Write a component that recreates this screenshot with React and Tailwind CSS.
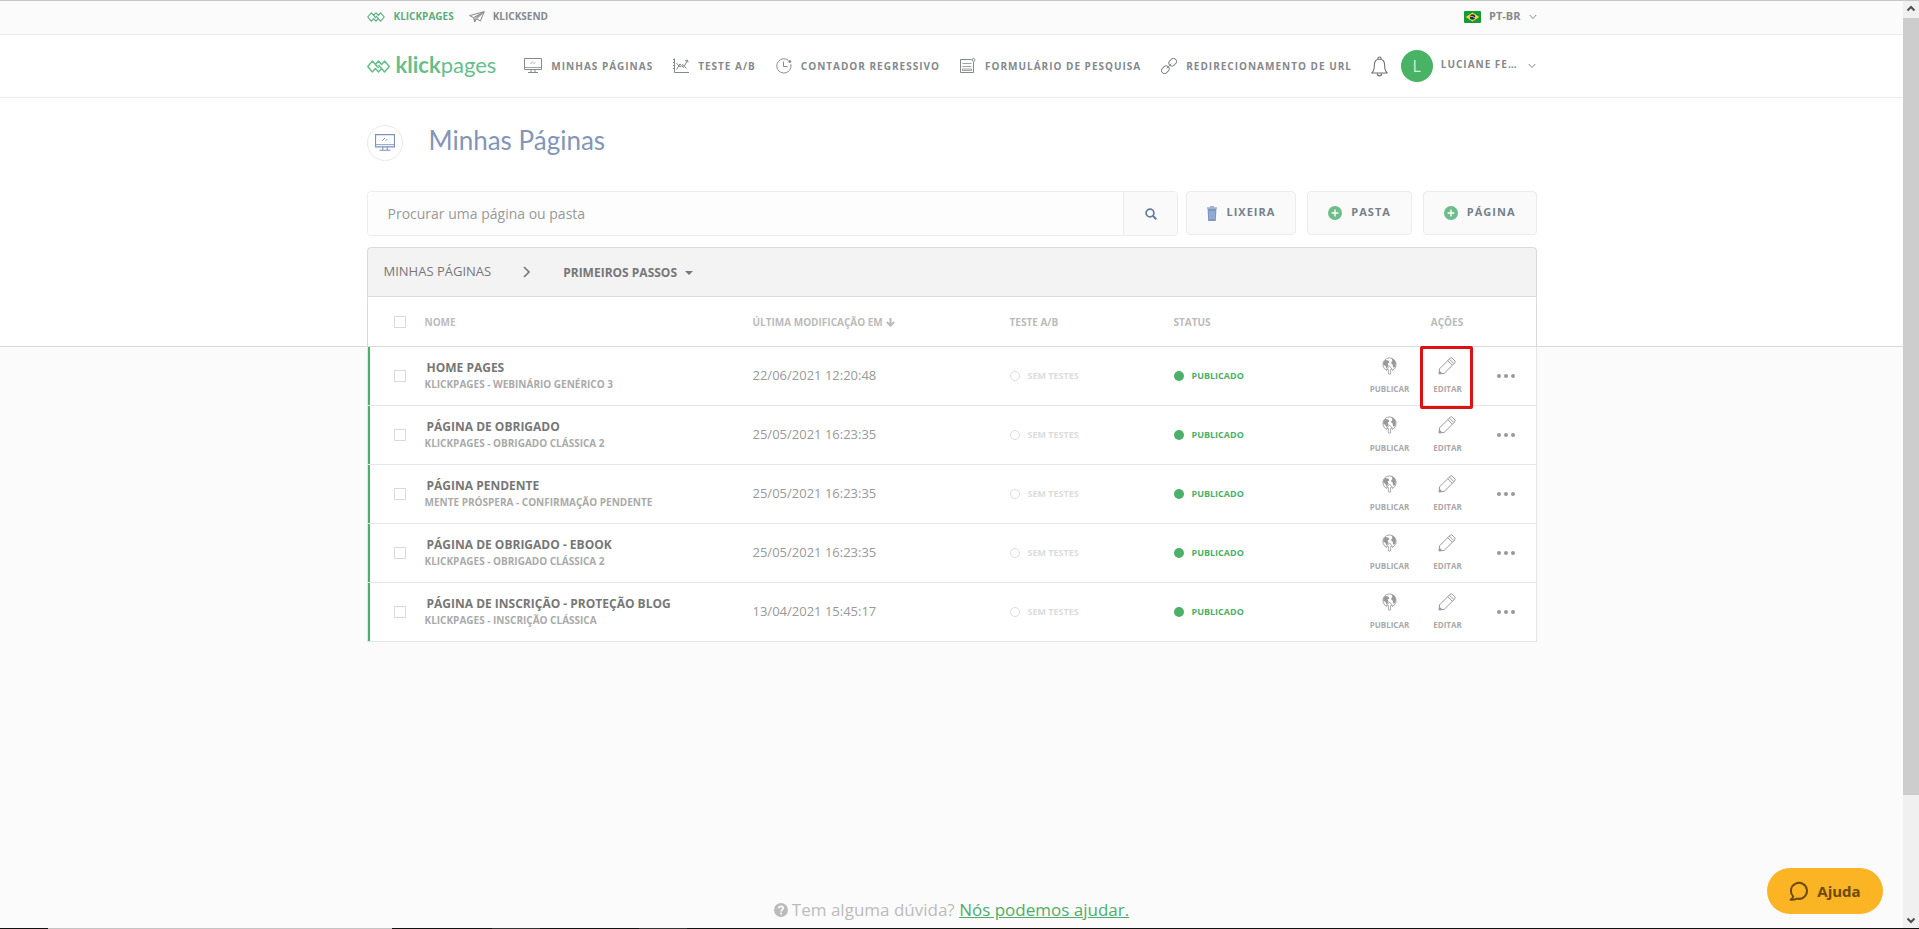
import React from "react";

const pages = [
  { name: "HOME PAGES", template: "KLICKPAGES - WEBINÁRIO GENÉRICO 3", date: "22/06/2021 12:20:48", marked: true },
  { name: "PÁGINA DE OBRIGADO", template: "KLICKPAGES - OBRIGADO CLÁSSICA 2", date: "25/05/2021 16:23:35" },
  { name: "PÁGINA PENDENTE", template: "MENTE PRÓSPERA - CONFIRMAÇÃO PENDENTE", date: "25/05/2021 16:23:35" },
  { name: "PÁGINA DE OBRIGADO - EBOOK", template: "KLICKPAGES - OBRIGADO CLÁSSICA 2", date: "25/05/2021 16:23:35" },
  { name: "PÁGINA DE INSCRIÇÃO - PROTEÇÃO BLOG", template: "KLICKPAGES - INSCRIÇÃO CLÁSSICA", date: "13/04/2021 15:45:17" },
];

function KnotIcon({ className }) {
  return (
    <svg viewBox="0 0 23 13" className={className} fill="none" stroke="currentColor" strokeWidth="1.5" strokeLinejoin="round" aria-hidden="true">
      <path d="M.8 6.5 L5.4 1 L8.4 4.4 L11.5 1 L14.6 4.4 L17.6 1 L22.2 6.5 L17.6 12 L14.6 8.6 L11.5 12 L8.4 8.6 L5.4 12 Z" />
      <path d="M8.4 4.4 L11.5 8 M11.5 5 L14.6 8.6" />
    </svg>
  );
}

function PlaneIcon({ className }) {
  return (
    <svg viewBox="0 0 16 12" className={className} fill="none" stroke="currentColor" strokeWidth="1" strokeLinejoin="round" aria-hidden="true">
      <path d="M.6 4.6 L15.2 .7 L11.4 10 L7.6 7.8 L5.6 11 L4.6 6.6 Z M4.6 6.6 L15.2 .7 L7.6 7.8 M5.6 11 L6.2 7.2 L12 3" />
    </svg>
  );
}

function MonitorIcon({ className }) {
  return (
    <svg viewBox="0 0 18 16" className={className} fill="none" stroke="currentColor" strokeWidth="1" aria-hidden="true">
      <path d="M.5 .5 H17.5 V11.5 H.5 Z M7 11.5 V14 M11 11.5 V14 M4 14.5 H14" />
      <path d="M.5 9.5 H17.5 M6.5 6 L9 3.5 M9.5 6 L11.2 4.3" strokeWidth=".8" />
    </svg>
  );
}

function ChartIcon() {
  return (
    <svg viewBox="0 0 16 16" className="size-4" fill="none" stroke="currentColor" strokeWidth="1" aria-hidden="true">
      <path d="M1.5 .5 V14.5 H16 M0 1.5 H1.5 M0 4.5 H1.5 M0 7.5 H1.5 M0 10.5 H1.5" />
      <path d="M3.5 11.5 L7 6 L10.5 9.5 L14.5 2.5 M3.5 5 L7 9 L10 6.5 L13.5 10.5 M12 3 L14.5 2 L15 4.5" />
    </svg>
  );
}

function ClockIcon() {
  return (
    <svg viewBox="0 0 16 16" className="size-4" fill="none" stroke="currentColor" strokeWidth="1" aria-hidden="true">
      <path d="M12.4 2.4 A7.1 7.1 0 1 0 14.8 6.2 M7.5 3.5 V8.5 H11.5" />
      <circle cx="13.8" cy="3.6" r="1" fill="currentColor" />
    </svg>
  );
}

function FormIcon() {
  return (
    <svg viewBox="0 0 16 16" className="size-4" fill="none" stroke="currentColor" strokeWidth="1" aria-hidden="true">
      <path d="M11.5 1.5 H.5 V14.5 H13.5 V4" />
      <path d="M2.5 5.5 H11.5 M2.5 8.5 H11.5" strokeWidth=".8" />
      <path d="M2.5 11 H11.5 V12.5 H2.5 Z" strokeWidth=".8" />
      <circle cx="13.5" cy="1.9" r="1.4" />
    </svg>
  );
}

function LinkIcon() {
  return (
    <svg viewBox="0 0 16 16" className="size-4" fill="none" stroke="currentColor" strokeWidth="1" aria-hidden="true">
      <rect x="-4" y="-3" width="8" height="6" rx="2.6" transform="translate(11.7 4.3) rotate(-45)" />
      <rect x="-4" y="-3" width="8" height="6" rx="2.6" transform="translate(4.3 11.7) rotate(-45)" />
      <path d="M5.6 10.4 L10.4 5.6" />
    </svg>
  );
}

function BellIcon() {
  return (
    <svg viewBox="0 0 17 21" className="h-[21px] w-[17px] text-[#6f7276]" fill="none" stroke="currentColor" strokeWidth="1.1" strokeLinejoin="round" aria-hidden="true">
      <path d="M.8 17 C3.2 15 3.4 13 3.4 9 C3.4 5.4 5.4 3.2 8.5 3.2 C11.6 3.2 13.6 5.4 13.6 9 C13.6 13 13.8 15 16.2 17 Z" />
      <path d="M6.3 17.2 C6.3 20.8 10.7 20.8 10.7 17.2 M6.8 3.4 C6.4 .2 10.6 .2 10.2 3.4" />
    </svg>
  );
}

function Chevron({ className }) {
  return (
    <svg viewBox="0 0 8 6" className={className} fill="none" stroke="currentColor" strokeWidth="1" aria-hidden="true">
      <path d="M.8 1 L4 4.6 L7.2 1" />
    </svg>
  );
}

function BrazilFlag() {
  return (
    <svg viewBox="0 0 17 12" className="h-3 w-[17px]" aria-hidden="true">
      <rect width="17" height="12" rx="1" fill="#149a3a" />
      <path d="M8.5 1.4 L15.2 6 L8.5 10.6 L1.8 6 Z" fill="#f6df1c" />
      <circle cx="8.5" cy="6" r="2.7" fill="#1d2b63" />
      <path d="M6 5.2 Q8.8 5 11 7" stroke="#fff" strokeWidth=".7" fill="none" />
    </svg>
  );
}

function TrashIcon() {
  return (
    <svg viewBox="0 0 10 15" className="h-[15px] w-2.5" aria-hidden="true">
      <path d="M3 0 H7 V1.2 H10 V3 H0 V1.2 H3 Z" fill="#a3b3d0" />
      <path d="M.6 3 H9.4 L8.8 15 H1.2 Z" fill="#7d96c4" />
      <path d="M3 5 V13 M5 5 V13 M7 5 V13" stroke="#b9c7e0" strokeWidth=".8" />
    </svg>
  );
}

function PlusIcon() {
  return (
    <svg viewBox="0 0 14 14" className="size-3.5" aria-hidden="true">
      <circle cx="7" cy="7" r="7" fill="#6cbd8a" />
      <path d="M7 3.6 V10.4 M3.6 7 H10.4" stroke="#fff" strokeWidth="1.4" />
    </svg>
  );
}

function SearchIcon() {
  return (
    <svg viewBox="0 0 12 12" className="size-3" fill="none" stroke="currentColor" aria-hidden="true">
      <circle cx="5" cy="5" r="3.9" strokeWidth="1.7" />
      <path d="M7.8 7.8 L11.3 11.3" strokeWidth="2" />
    </svg>
  );
}

function GlobeIcon() {
  return (
    <svg viewBox="0 0 15 18" className="h-[18px] w-[15px]" aria-hidden="true">
      <path d="M5 13.6 A6.6 6.6 0 1 1 10 13.6" fill="none" stroke="#999" strokeWidth=".9" />
      <path d="M1.4 5 L3.4 3 L6.4 3.6 L7.4 5.4 L5.6 6.6 L6.6 8.6 L4.6 11.4 L3.4 9 L1.2 7.6 Z" fill="#999" />
      <path d="M9.6 1.6 L12.6 3 L13.8 6 L13.2 10 L11.2 10.6 L10.6 7.6 L8.8 6 L10.4 4 Z" fill="#999" />
      <path d="M6.4 17 V12.4 H4.6 L7.5 9 L10.4 12.4 H8.6 V17 Z" fill="#fff" stroke="#999" strokeWidth=".8" />
    </svg>
  );
}

function PencilIcon() {
  return (
    <svg viewBox="0 0 18 18" className="size-[18px]" fill="none" stroke="#999" strokeWidth="1" strokeLinejoin="round" aria-hidden="true">
      <path d="M1 17 L1.6 11.8 L12.4 1 Q13.2 .4 14 1 L17 4 Q17.6 4.8 17 5.6 L6.2 16.4 Z" />
      <path d="M9.8 3.7 L14.3 8.2 M11.4 2.1 L15.9 6.6" />
      <path d="M1.3 13.6 L4.5 16.6 L1 17.1 Z" fill="#999" stroke="none" />
    </svg>
  );
}

function NavItem({ icon, children }) {
  return (
    <a href="#" className="flex items-center gap-[9px] text-[10px] font-bold tracking-[1px] whitespace-nowrap text-[#85898e]">
      {icon}
      {children}
    </a>
  );
}

function ToolButton({ icon, children }) {
  return (
    <button type="button" className="flex h-11 items-center gap-[9px] rounded border border-[#ececec] bg-[#fafafa] px-5 text-[11px] font-bold tracking-[1px] text-[#76808b]">
      {icon}
      <span className="pb-0.5">{children}</span>
    </button>
  );
}

function Check({ label }) {
  return (
    <input type="checkbox" aria-label={label} className="block size-3 appearance-none border border-[#dadada] bg-white" />
  );
}

function PageRow({ page }) {
  const line = "border-b border-[#e6e6e6] p-0";
  return (
    <tr className="h-[59px] bg-white">
      <td className={line}>
        <div className="flex h-[58px] items-center border-l border-[#e6e6e6]">
          <div className="flex h-full items-center border-l-2 border-[#4bb069] pl-6">
            <Check label={page.name} />
          </div>
        </div>
      </td>
      <td className={line}>
        <a href="#" className="ml-0.5 block text-xs leading-4 font-bold text-[#777]">{page.name}</a>
        <p className="text-[10px] leading-4 font-bold text-[#aaa]">{page.template}</p>
      </td>
      <td className={line + " text-[13px] text-[#999]"}>{page.date}</td>
      <td className={line}>
        <span className="flex items-center gap-2 text-[9px] font-bold text-[#dcdcdc]">
          <span className="size-2.5 rounded-full border border-[#dcdcdc]" />
          SEM TESTES
        </span>
      </td>
      <td className={line}>
        <span className="flex items-center gap-2 text-[9px] font-bold text-[#4bb069]">
          <span className="size-2.5 rounded-full bg-[#4bb069]" />
          PUBLICADO
        </span>
      </td>
      <td className={line}>
        <button type="button" className="mx-auto flex flex-col items-center gap-2 text-[8px] leading-3 font-bold text-[#aaa]">
          <GlobeIcon />
          PUBLICAR
        </button>
      </td>
      <td className={line + " relative"}>
        <button type="button" className="mx-auto flex flex-col items-center gap-2 text-[8px] leading-3 font-bold text-[#aaa]">
          <PencilIcon />
          EDITAR
        </button>
        {page.marked && <span className="pointer-events-none absolute -top-px left-0 z-10 h-[63px] w-[53px] rounded-xs border-3 border-[#dd1111]" />}
      </td>
      <td className={line}>
        <div className="flex h-[58px] items-center justify-center border-r border-[#e6e6e6] pl-0.5">
          <button type="button" aria-label="Mais opções" className="flex gap-[3px]">
            <span className="size-1 rounded-full bg-[#999]" />
            <span className="size-1 rounded-full bg-[#999]" />
            <span className="size-1 rounded-full bg-[#999]" />
          </button>
        </div>
      </td>
    </tr>
  );
}

export default function App() {
  const head = "border-b border-[#dadada] p-0 text-left text-[10px] font-bold text-[#bbb]";
  return (
    <div className="flex min-h-screen flex-col bg-[#fbfbfb] font-['Open_Sans',sans-serif]">
      <div className="flex flex-1 border-t border-[#c8c8c8]">
        <div className="flex min-w-0 flex-1 flex-col">
          <div className="border-b border-[#ebebeb]">
            <div className="mx-auto flex h-[33px] max-w-[1170px] items-center justify-between pb-0.5 text-[11px] font-bold text-[#85898e]">
              <div className="flex items-center">
                <a href="#" className="flex items-center gap-[9px] text-[10px] text-[#5bad80]">
                  <KnotIcon className="h-2.5 w-[18px]" />
                  KLICKPAGES
                </a>
                <a href="#" className="ml-[15px] flex items-center gap-2 text-[10px]">
                  <PlaneIcon className="h-3 w-4" />
                  KLICKSEND
                </a>
              </div>
              <button type="button" className="flex items-center gap-2">
                <BrazilFlag />
                PT-BR
                <Chevron className="h-1.5 w-2" />
              </button>
            </div>
          </div>

          <header className="border-b border-[#ebebeb] bg-white">
            <div className="mx-auto flex h-[62px] max-w-[1170px] items-center">
              <a href="#" className="flex items-center gap-1.5 text-[#66bf8a]">
                <KnotIcon className="h-[13px] w-[23px]" />
                <span className="pb-0.5 font-['Lato',sans-serif] text-[22px] leading-6">
                  <span className="font-bold">klick</span>pages
                </span>
              </a>
              <nav className="ml-7 flex items-center gap-5">
                <NavItem icon={<MonitorIcon className="h-4 w-[18px]" />}>MINHAS PÁGINAS</NavItem>
                <NavItem icon={<ChartIcon />}>TESTE A/B</NavItem>
                <NavItem icon={<ClockIcon />}>CONTADOR REGRESSIVO</NavItem>
                <NavItem icon={<FormIcon />}>FORMULÁRIO DE PESQUISA</NavItem>
                <NavItem icon={<LinkIcon />}>REDIRECIONAMENTO DE URL</NavItem>
              </nav>
              <div className="ml-auto flex items-center pr-px">
                <button type="button" aria-label="Notificações"><BellIcon /></button>
                <button type="button" className="ml-[13px] flex items-center gap-2 text-[10px] font-bold tracking-[1px] whitespace-nowrap text-[#85898e]">
                  <span className="flex size-8 shrink-0 items-center justify-center rounded-full bg-[#48b265] text-base font-medium tracking-normal text-[#d3efdb]">L</span>
                  <span className="pb-1">LUCIANE FE…</span>
                  <Chevron className="ml-0.5 h-1.5 w-2" />
                </button>
              </div>
            </div>
          </header>

          <main className="flex flex-1 flex-col bg-[linear-gradient(#fff_248px,#dadada_248px,#dadada_249px,#fbfbfb_249px)]">
            <div className="mx-auto w-full max-w-[1170px]">
              <div className="flex items-center gap-[26px] pt-[27px]">
                <span className="flex size-9 items-center justify-center rounded-full border border-[#e9e9e9] text-[#7b93ba]">
                  <MonitorIcon className="h-[18px] w-5" />
                </span>
                <h1 className="pb-1.5 font-['Lato',sans-serif] text-[26px] leading-[30px] text-[#8296b7]">Minhas Páginas</h1>
              </div>

              <div className="mt-[30px] flex items-start gap-[11px]">
                <form className="-mr-[3px] flex h-[45px] flex-1 overflow-hidden rounded border border-[#ececec]">
                  <input aria-label="Procurar" placeholder="Procurar uma página ou pasta" className="min-w-0 flex-1 bg-[#fdfdfd] px-5 text-sm outline-none placeholder:text-[#999]" />
                  <button type="button" aria-label="Buscar" className="flex w-[54px] items-center justify-center border-l border-[#ececec] bg-[#fafafa] text-[#66799f]">
                    <SearchIcon />
                  </button>
                </form>
                <ToolButton icon={<TrashIcon />}>LIXEIRA</ToolButton>
                <ToolButton icon={<PlusIcon />}>PASTA</ToolButton>
                <ToolButton icon={<PlusIcon />}>PÁGINA</ToolButton>
              </div>

              <div className="mt-[11px] flex h-[50px] items-center rounded-t-sm border border-[#dadada] bg-[#f3f3f3] px-4 text-[#777]">
                <a href="#" className="text-[13px]">MINHAS PÁGINAS</a>
                <svg viewBox="0 0 8 12" className="ml-8 h-3 w-2" fill="none" stroke="currentColor" strokeWidth="1.6" aria-hidden="true">
                  <path d="M1 1 L6 6 L1 11" />
                </svg>
                <button type="button" className="ml-8 flex items-center gap-2 pt-0.5 text-xs font-bold">
                  PRIMEIROS PASSOS
                  <svg viewBox="0 0 8 4" className="h-1 w-2" fill="currentColor" aria-hidden="true">
                    <path d="M0 0 H8 L4 4 Z" />
                  </svg>
                </button>
              </div>

              <table className="w-full table-fixed border-separate border-spacing-0">
                <colgroup>
                  <col className="w-[58px]" />
                  <col className="w-[328px]" />
                  <col className="w-[257px]" />
                  <col className="w-[164px]" />
                  <col />
                  <col className="w-[62px]" />
                  <col className="w-[54px]" />
                  <col className="w-[62px]" />
                </colgroup>
                <thead>
                  <tr className="h-[50px] bg-white">
                    <th className={head + " border-l"}>
                      <div className="pl-[26px]"><Check label="Selecionar todas" /></div>
                    </th>
                    <th className={head + " pt-0.5"}>NOME</th>
                    <th className={head + " pt-0.5"}>
                      <span className="flex items-center gap-[3px]">
                        ÚLTIMA MODIFICAÇÃO EM
                        <svg viewBox="0 0 9 9" className="size-[9px]" fill="none" stroke="currentColor" strokeWidth="2" aria-hidden="true">
                          <path d="M4.5 0 V7 M.8 4 L4.5 7.6 L8.2 4" />
                        </svg>
                      </span>
                    </th>
                    <th className={head + " pt-0.5"}>TESTE A/B</th>
                    <th className={head + " pt-0.5"}>STATUS</th>
                    <th className={head + " border-r pt-0.5"} colSpan={3}>
                      <span className="block text-center">AÇÕES</span>
                    </th>
                  </tr>
                </thead>
                <tbody>
                  {pages.map((page) => (
                    <PageRow key={page.name} page={page} />
                  ))}
                </tbody>
              </table>
            </div>

            <p className="mt-auto flex items-center justify-center gap-1 pb-1.5 text-[17px] leading-6 text-[#bbb]">
              <svg viewBox="0 0 14 14" className="size-3.5" aria-hidden="true">
                <circle cx="7" cy="7" r="7" fill="#bbb" />
                <path d="M4.7 5.3 C4.9 2.6 9.3 2.7 9.2 5.2 C9.1 6.8 7.1 6.8 7.1 8.5" fill="none" stroke="#fbfbfb" strokeWidth="1.7" />
                <rect x="6.2" y="9.6" width="1.8" height="1.8" fill="#fbfbfb" />
              </svg>
              <span>
                Tem alguma dúvida? <a href="#" className="text-[#4dae6c] underline">Nós podemos ajudar.</a>
              </span>
            </p>
          </main>
        </div>

        <div className="flex w-4 flex-col items-center bg-[#f0f0f0] text-[#505050]" aria-hidden="true">
          <svg viewBox="0 0 16 17" className="h-[17px] w-4" fill="none" stroke="currentColor" strokeWidth="2"><path d="M4.5 9.5 L8 6 L11.5 9.5" /></svg>
          <div className="flex w-full flex-1 flex-col">
            <div className="h-[87%] w-full bg-[#cdcdcd]" />
          </div>
          <svg viewBox="0 0 16 17" className="h-[17px] w-4" fill="none" stroke="currentColor" strokeWidth="2"><path d="M4.5 7.5 L8 11 L11.5 7.5" /></svg>
        </div>
      </div>

      <div className="flex h-px bg-[#111]" aria-hidden="true">
        <span className="ml-12 w-[344px] bg-[#c4c4c4]" />
        <span className="ml-[100px] w-12 bg-[#333]" />
        <span className="ml-[99px] w-12 bg-[#333]" />
      </div>

      <button type="button" className="fixed right-9 bottom-[15px] flex h-[46px] w-[116px] items-center justify-center gap-2 rounded-full bg-[#fbb424] text-[15px] font-bold text-[#6b4a0a]">
        <svg viewBox="0 0 20 20" className="size-5" fill="none" stroke="currentColor" strokeWidth="2" strokeLinejoin="round" aria-hidden="true">
          <path d="M4.2 15.4 A8 8 0 1 1 8 17.6 C6 18.6 4 19 1.6 18.8 C3 17.8 3.9 16.8 4.2 15.4 Z" />
        </svg>
        Ajuda
      </button>
    </div>
  );
}
